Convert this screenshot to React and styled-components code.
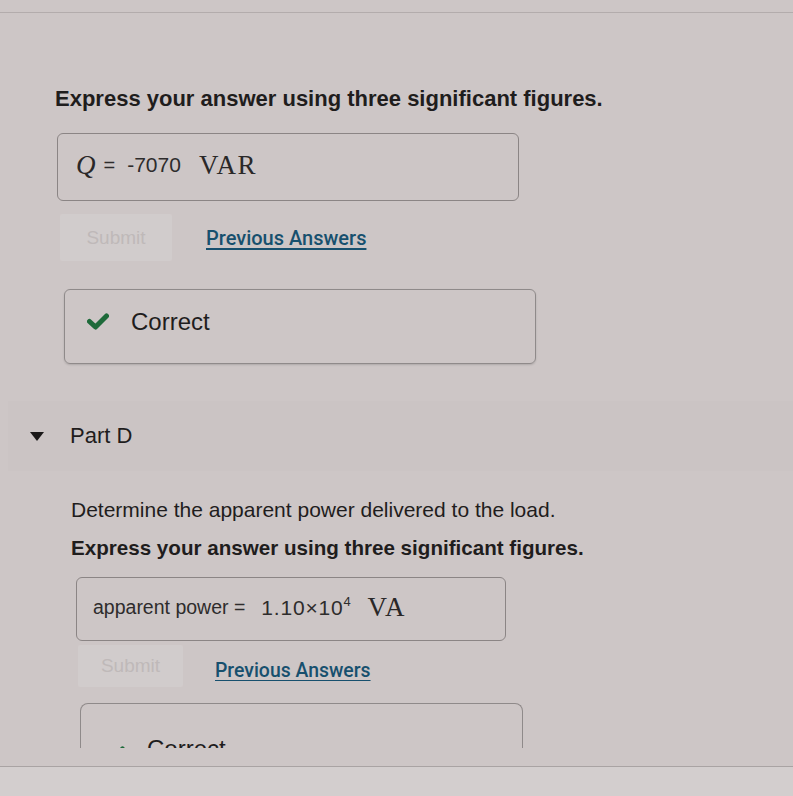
import styled, { createGlobalStyle } from "styled-components";

const Global = createGlobalStyle`
  html, body {
    margin: 0;
    padding: 0;
    background: #cdc6c6;
    font-family: "Liberation Sans", Arial, sans-serif;
    color: #1e1c1c;
  }
`;

const Page = styled.div`
  width: 793px;
  height: 796px;
  overflow: hidden;
  display: flex;
  flex-direction: column;
`;

const TopBar = styled.div`
  height: 12px;
  border-bottom: 1px solid #b3acac;
  flex-shrink: 0;
`;

const Scroll = styled.div`
  height: 735px;
  overflow: hidden;
  flex-shrink: 0;
`;

const Footer = styled.div`
  flex: 1;
  margin-top: 18px;
  border-top: 1px solid #a9a3a3;
  background: #d3cece;
`;

const Block = styled.div`
  padding-left: ${({ indent }) => indent}px;
  padding-top: ${({ top }) => top || 0}px;
`;

const Instruction = styled.p`
  margin: 0;
  font-size: ${({ size }) => size || 20}px;
  line-height: 26px;
  color: #1f1d1d;
  margin-top: ${({ gap }) => gap || 0}px;
`;

const AnswerBox = styled.div`
  box-sizing: border-box;
  width: ${({ w }) => w}px;
  height: ${({ h }) => h}px;
  margin-left: ${({ shift }) => shift || 0}px;
  margin-top: ${({ gap }) => gap}px;
  border: 1px solid #8b8585;
  border-radius: 6px;
  display: flex;
  align-items: center;
  padding-left: ${({ pad }) => pad}px;
  padding-bottom: 4px;
  gap: 8px;
  color: #333;
`;

const MathVar = styled.span`
  font-family: "Liberation Serif", "Times New Roman", serif;
  font-style: ${({ italic }) => (italic ? "italic" : "normal")};
  font-size: 27px;
  color: #2a2828;
  margin-left: ${({ ml }) => ml || 0}px;
  letter-spacing: ${({ italic }) => (italic ? 0 : 1.5)}px;
`;

const Value = styled.span`
  font-size: ${({ size }) => size || 20}px;
  color: #2e2c2c;
  margin-left: ${({ ml }) => ml || 0}px;
  letter-spacing: ${({ spacing }) => spacing || 0}px;
  sup {
    font-size: 13px;
    vertical-align: 9px;
  }
`;

const Actions = styled.div`
  display: flex;
  align-items: center;
  margin-top: ${({ gap }) => gap}px;
  margin-left: ${({ shift }) => shift}px;
`;

const SubmitButton = styled.button`
  box-sizing: border-box;
  width: ${({ w }) => w}px;
  height: ${({ h }) => h}px;
  border: none;
  border-radius: 2px;
  background: #d1cccc;
  color: #bfb9b9;
  font-family: "Liberation Sans", Arial, sans-serif;
  font-size: 19px;
  padding: 0;
`;

const PrevLink = styled.a`
  margin-left: ${({ ml }) => ml}px;
  padding-top: ${({ drop }) => drop || 0}px;
  font-family: Roboto, "Liberation Sans", sans-serif;
  font-weight: 500;
  font-size: ${({ size }) => size}px;
  color: #17506e;
  text-decoration: underline;
  text-underline-offset: 3px;
`;

const Feedback = styled.div`
  box-sizing: border-box;
  width: ${({ w }) => w}px;
  height: ${({ h }) => h}px;
  margin-left: ${({ shift }) => shift}px;
  margin-top: ${({ gap }) => gap}px;
  border: 1px solid #8f8a8a;
  border-bottom-width: ${({ open }) => (open ? 0 : 1)}px;
  border-radius: ${({ open }) => (open ? "8px 8px 0 0" : "6px")};
  box-shadow: ${({ open }) => (open ? "none" : "0 1px 2px rgba(0,0,0,0.15)")};
  display: flex;
  align-items: ${({ open }) => (open ? "flex-end" : "center")};
  padding-left: 22px;
  padding-bottom: ${({ open }) => (open ? 0 : 10)}px;
  gap: 22px;
  font-size: 24px;
  color: #1f1d1d;
  overflow: hidden;
`;

const PartHeader = styled.div`
  margin-top: 37px;
  margin-left: 8px;
  height: 70px;
  background: #cbc4c4;
  display: flex;
  align-items: center;
  padding-left: 22px;
  gap: 26px;
  font-size: 22px;
  color: #1f1d1d;
`;

const Caret = styled.span`
  width: 0;
  height: 0;
  border-left: 7px solid transparent;
  border-right: 7px solid transparent;
  border-top: 9px solid #1a1818;
`;

function Check() {
  return (
    <svg width="22" height="17" viewBox="0 0 22 17">
      <path d="M2.5 8.5 L8.5 14 L19.5 3" fill="none" stroke="#1e6a3a" strokeWidth="5" strokeLinecap="round" strokeLinejoin="round" />
    </svg>
  );
}

export default function App() {
  return (
    <Page>
      <Global />
      <TopBar />
      <Scroll>
        <Block indent={55} top={73}>
          <Instruction size={22}>
            <b>Express your answer using three significant figures.</b>
          </Instruction>
          <AnswerBox w={462} h={68} shift={2} gap={21} pad={18}>
            <MathVar italic>Q</MathVar>
            <Value>=</Value>
            <Value size={21} ml={4}>-7070</Value>
            <MathVar ml={10}>VAR</MathVar>
          </AnswerBox>
          <Actions gap={13} shift={5}>
            <SubmitButton w={112} h={47}>Submit</SubmitButton>
            <PrevLink ml={34} size={20}>Previous Answers</PrevLink>
          </Actions>
          <Feedback w={472} h={75} shift={9} gap={28}>
            <Check />
            Correct
          </Feedback>
        </Block>

        <PartHeader>
          <Caret />
          Part D
        </PartHeader>

        <Block indent={71} top={26}>
          <Instruction size={21}>Determine the apparent power delivered to the load.</Instruction>
          <Instruction size={20.6} gap={12}>
            <b>Express your answer using three significant figures.</b>
          </Instruction>
          <AnswerBox w={430} h={64} shift={5} gap={16} pad={16}>
            <Value size={19.5}>apparent power =</Value>
            <Value size={21} spacing={0.8} ml={8}>1.10×10<sup>4</sup></Value>
            <MathVar ml={8}>VA</MathVar>
          </AnswerBox>
          <Actions gap={4} shift={7}>
            <SubmitButton w={105} h={42}>Submit</SubmitButton>
            <PrevLink ml={32} size={19.4} drop={8}>Previous Answers</PrevLink>
          </Actions>
          <Feedback w={443} h={60} shift={9} gap={16} open>
            <Check />
            Correct
          </Feedback>
        </Block>
      </Scroll>
      <Footer />
    </Page>
  );
}
